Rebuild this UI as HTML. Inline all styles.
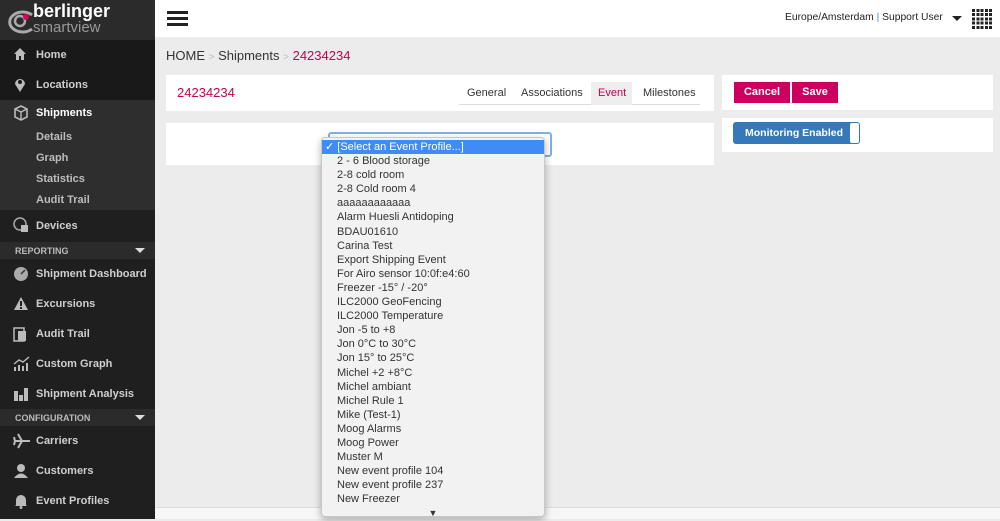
<!DOCTYPE html>
<html><head><meta charset="utf-8"><style>
*{box-sizing:border-box;margin:0;padding:0}
body{width:1000px;height:519px;overflow:hidden;background:#ececec;font-family:"Liberation Sans",sans-serif;position:relative}
.sb{position:absolute;left:0;top:0;width:155px;height:519px;background:#1f1f1f;color:#cfcfcf;font-size:11px;font-weight:bold}
.logo{height:40px;background:#2b2b2b;position:relative}
.it{height:30px;display:flex;align-items:center;padding-left:36px;position:relative}
.it svg{position:absolute;left:13px;top:7px}
.sub{height:21px;display:flex;align-items:center;padding-left:36px;color:#bdbdbd}
.hd{height:17px;background:#2b2b2b;font-size:9px;color:#bbb;display:flex;align-items:center;padding-left:15px;position:relative}
.hd:after{content:"";position:absolute;right:10px;top:6px;border:5px solid transparent;border-top:5px solid #ddd;border-bottom:0}
.top{position:absolute;left:155px;top:0;right:0;height:37px;background:#fff}
.panel{position:absolute;background:#fff}
.dd{position:absolute;left:321px;top:137px;width:224px;height:380px;background:#f2f2f2;border:1px solid #c8c8c8;border-radius:4px;box-shadow:0 3px 8px rgba(0,0,0,.3);font-size:11px;color:#333;padding-top:2px}
.dd div{height:14.1px;line-height:14px;padding-left:15px}
.dd .sel{background:#3f8cf6;color:#fff;padding-left:3px}
</style></head><body>
<div class="sb">
 <div class="logo">
  <svg width="40" height="30" style="position:absolute;left:2px;top:6px"><path d="M30 9 A13 10 0 1 0 30 23" fill="none" stroke="#aaa" stroke-width="3"/><circle cx="18" cy="15" r="5" fill="none" stroke="#aaa" stroke-width="2.5"/><circle cx="24" cy="11" r="3" fill="#e0005a"/></svg>
  <div style="position:absolute;left:33px;top:1px;font-size:18px;color:#fff;font-weight:bold">berlinger</div>
  <div style="position:absolute;left:33px;top:19px;font-size:15px;color:#999;font-weight:normal">smartview</div>
 </div>
 <div style="background:#191919">
 <div class="it"><svg width="14" height="14"><path d="M1 7 L7 1 L13 7 L11 7 L11 13 L8 13 L8 9 L6 9 L6 13 L3 13 L3 7Z" fill="#bbb"/></svg>Home</div>
 <div class="it"><svg width="14" height="16"><path d="M7 15 L2 7 A5 5 0 1 1 12 7Z" fill="#bbb"/><circle cx="7" cy="5" r="2" fill="#191919"/></svg>Locations</div>
 </div>
 <div style="background:#2e2e2e">
 <div class="it" style="color:#fff;height:26px"><svg width="16" height="16" style="top:5px"><path d="M2 4 L8 1 L14 4 L14 12 L8 15 L2 12Z" fill="none" stroke="#bbb" stroke-width="1.6"/><path d="M2 4 L8 7 L14 4 M8 7 L8 15" stroke="#bbb" stroke-width="1.4" fill="none"/></svg>Shipments</div>
 <div class="sub">Details</div><div class="sub">Graph</div><div class="sub">Statistics</div><div class="sub">Audit Trail</div>
 </div>
 <div class="it" style="height:32px"><svg width="16" height="16"><circle cx="7" cy="7" r="6" fill="none" stroke="#aaa" stroke-width="1.5"/><rect x="8" y="8" width="7" height="7" fill="#bbb"/></svg>Devices</div>
 <div class="hd">REPORTING</div>
 <div class="it"><svg width="16" height="16"><circle cx="8" cy="8" r="7" fill="#aaa"/><path d="M8 8 L12 4" stroke="#333" stroke-width="1.5"/></svg>Shipment Dashboard</div>
 <div class="it"><svg width="16" height="16"><path d="M8 1 L15 14 L1 14Z" fill="#bbb"/><rect x="7" y="5" width="2" height="5" fill="#1f1f1f"/><rect x="7" y="11" width="2" height="2" fill="#1f1f1f"/></svg>Excursions</div>
 <div class="it"><svg width="16" height="16"><rect x="1" y="2" width="10" height="13" fill="none" stroke="#bbb" stroke-width="1.5"/><rect x="5" y="5" width="8" height="10" fill="#bbb"/></svg>Audit Trail</div>
 <div class="it"><svg width="18" height="16"><rect x="1" y="11" width="2" height="4" fill="#bbb"/><rect x="5" y="9" width="2" height="6" fill="#bbb"/><rect x="9" y="10" width="2" height="5" fill="#bbb"/><rect x="13" y="7" width="2" height="8" fill="#bbb"/><path d="M1 8 L6 4 L10 6 L16 1" stroke="#bbb" fill="none" stroke-width="1.4"/></svg>Custom Graph</div>
 <div class="it"><svg width="16" height="16"><rect x="1" y="5" width="4" height="10" fill="#bbb"/><rect x="6" y="9" width="4" height="6" fill="#bbb"/><rect x="11" y="2" width="4" height="13" fill="#bbb"/></svg>Shipment Analysis</div>
 <div class="hd">CONFIGURATION</div>
 <div class="it"><svg width="18" height="16"><path d="M1 8 L17 8 M9 8 L5 1 M9 8 L5 15 M2 8 L1 4 M2 8 L1 12" stroke="#bbb" stroke-width="2" fill="none"/></svg>Carriers</div>
 <div class="it"><svg width="16" height="16"><circle cx="8" cy="5" r="4" fill="#bbb"/><path d="M1 15 Q8 6 15 15Z" fill="#bbb"/></svg>Customers</div>
 <div class="it"><svg width="16" height="16"><path d="M3 12 L3 7 A5 5 0 0 1 13 7 L13 12 L14 13 L2 13Z" fill="#bbb"/><circle cx="8" cy="14.5" r="1.5" fill="#bbb"/></svg>Event Profiles</div>
</div>
<div class="top">
 <div style="position:absolute;left:12px;top:11px;width:21px;height:3px;background:#222;box-shadow:0 6px 0 #222,0 12px 0 #222"></div>
 <div style="position:absolute;left:630px;top:12px;font-size:10.3px;color:#222">Europe/Amsterdam <span style="color:#4a90d9">|</span> Support User</div>
 <div style="position:absolute;left:797px;top:16px;border:5px solid transparent;border-top:5px solid #222;border-bottom:0"></div>
 <div style="position:absolute;left:817px;top:9px;width:20px;height:20px;background:repeating-linear-gradient(90deg,#222 0 3px,transparent 3px 4.3px);-webkit-mask:repeating-linear-gradient(0deg,#000 0 3px,transparent 3px 4.3px)"></div>
</div>
<div style="position:absolute;left:166px;top:48px;font-size:13px;color:#333">HOME <span style="color:#bbb;font-size:10px">&gt;</span> Shipments <span style="color:#bbb;font-size:10px">&gt;</span> <span style="color:#c8004f">24234234</span></div>
<div class="panel" style="left:166px;top:75px;width:548px;height:36px">
 <div style="position:absolute;left:11px;top:10px;color:#c8004f;font-size:13px">24234234</div>
 <div style="position:absolute;left:293px;top:7px;width:241px;height:23px;border-bottom:1px solid #ddd;font-size:11px;color:#333">
  <span style="position:absolute;left:8px;top:5px">General</span>
  <span style="position:absolute;left:62px;top:5px">Associations</span>
  <span style="position:absolute;left:132px;top:0;width:41px;height:23px;background:#eee;color:#c8004f;padding:5px 0 0 7px">Event</span>
  <span style="position:absolute;left:184px;top:5px">Milestones</span>
 </div>
</div>
<div class="panel" style="left:166px;top:123px;width:548px;height:42px">
 <div style="position:absolute;left:162px;top:9px;width:224px;height:25px;border:2px solid #7fb0e8;border-radius:3px"></div>
</div>
<div class="panel" style="left:722px;top:75px;width:271px;height:35px">
 <div style="position:absolute;left:12px;top:7px;width:56px;height:21px;background:#cc005e;color:#fff;font-size:11px;font-weight:bold;text-align:center;line-height:20px">Cancel</div>
 <div style="position:absolute;left:70px;top:7px;width:46px;height:21px;background:#cc005e;color:#fff;font-size:11px;font-weight:bold;text-align:center;line-height:20px">Save</div>
</div>
<div class="panel" style="left:722px;top:118px;width:271px;height:34px">
 <div style="position:absolute;left:11px;top:4px;width:127px;height:22px;background:#3579b8;border-radius:3px;color:#fff;font-size:10.5px;font-weight:bold;padding:5px 0 0 12px">Monitoring Enabled
  <div style="position:absolute;right:1px;top:1px;width:9px;height:20px;background:#fff;border-radius:2px"></div></div>
</div>
<div style="position:absolute;left:155px;top:507px;right:0;height:12px;background:#f7f7f7;border-top:1px solid #ddd"></div>
<div class="dd">
<div class="sel">✓ [Select an Event Profile...]</div>
<div>2 - 6 Blood storage</div><div>2-8 cold room</div><div>2-8 Cold room 4</div><div>aaaaaaaaaaaa</div><div>Alarm Huesli Antidoping</div><div>BDAU01610</div><div>Carina Test</div><div>Export Shipping Event</div><div>For Airo sensor 10:0f:e4:60</div><div>Freezer -15° / -20°</div><div>ILC2000 GeoFencing</div><div>ILC2000 Temperature</div><div>Jon -5 to +8</div><div>Jon 0°C to 30°C</div><div>Jon 15° to 25°C</div><div>Michel +2 +8°C</div><div>Michel ambiant</div><div>Michel Rule 1</div><div>Mike (Test-1)</div><div>Moog Alarms</div><div>Moog Power</div><div>Muster M</div><div>New event profile 104</div><div>New event profile 237</div><div>New Freezer</div>
<div style="padding:0;text-align:center;font-size:9px">▼</div>
</div>
</body></html>
